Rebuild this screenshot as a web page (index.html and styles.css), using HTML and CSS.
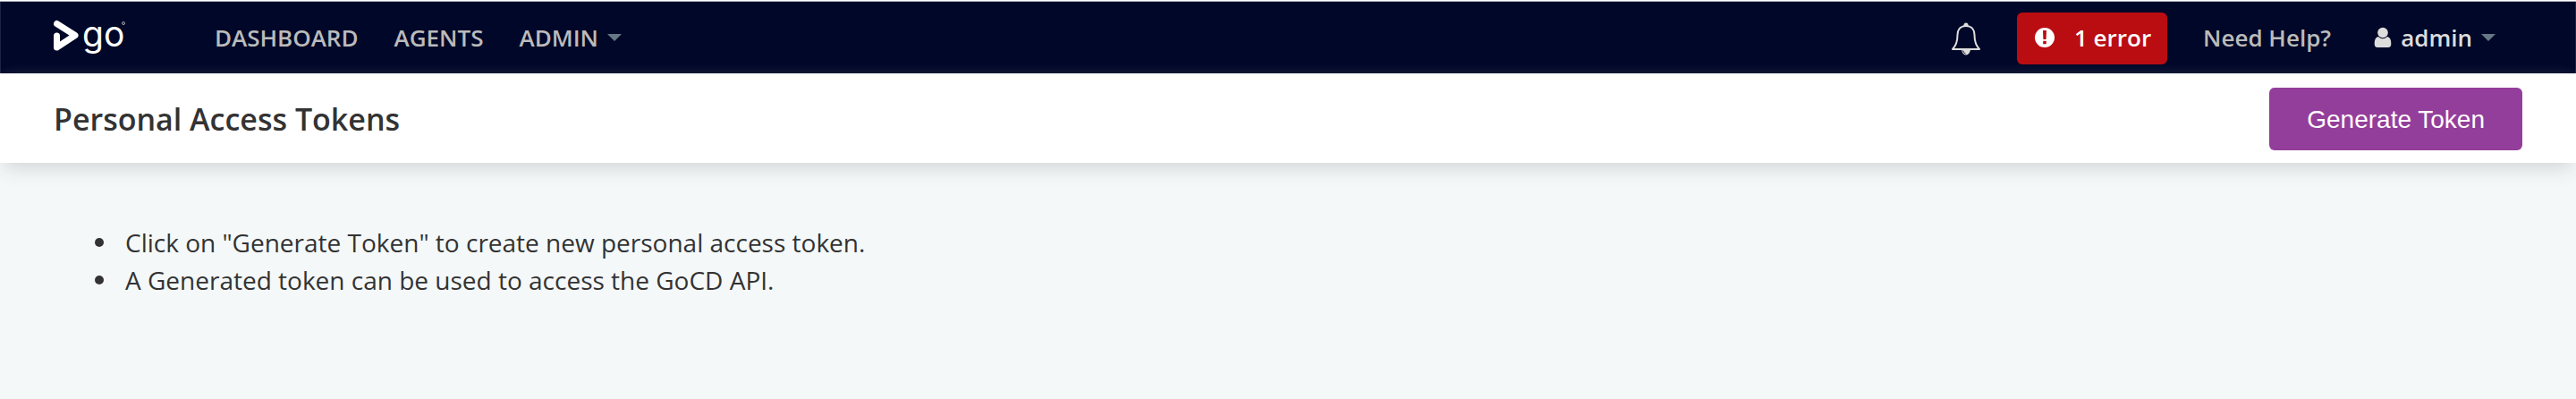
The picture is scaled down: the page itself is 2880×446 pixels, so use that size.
FILE: index.html
```html
<!DOCTYPE html>
<html lang="en">
<head>
<meta charset="utf-8">
<title>Personal Access Tokens - Go</title>
<link rel="stylesheet" href="styles.css">
</head>
<body>
<header class="site-header">
  <a class="logo" href="#" aria-label="Go">
    <svg width="92" height="56" viewBox="0 0 92 56" aria-hidden="true">
      <path class="logo-mark" d="M3.500 25V38L24 24.500L3.500 11.500"/>
      <text class="logo-word" x="32" y="37">go</text>
      <circle class="logo-dot" cx="78" cy="11" r="1.500"/>
    </svg>
  </a>
  <nav class="main-nav" aria-label="Main">
    <a href="#">DASHBOARD</a>
    <a href="#">AGENTS</a>
    <a href="#">ADMIN<span class="caret"></span></a>
  </nav>
  <div class="header-tools">
    <button class="bell" type="button" aria-label="Notifications">
      <svg width="34" height="38" viewBox="0 0 34 38" aria-hidden="true">
        <path class="bell-body" d="M17 4C10 4 7.500 9 7.500 14C7.500 22 6 26 2 30H32C28 26 26.500 22 26.500 14C26.500 9 24 4 17 4Z"/>
        <path class="bell-fill" d="M14.500 4.500V3a2.500 2.500 0 0 1 5 0V4.500ZM12 30H22a5 6.500 0 0 1-10 0Z"/>
        <path class="bell-mark" d="M13.500 31.500Q14 34 16.500 35"/>
      </svg>
    </button>
    <button class="error-button" type="button">
      <svg width="22" height="24" viewBox="0 0 22 24" aria-hidden="true">
        <circle cx="11" cy="12" r="11" fill="#fff"/>
        <path fill="#ba0d12" d="M9 4H13L12.600 14H9.400ZM9.200 15.800H12.800V19.200H9.200Z"/>
      </svg>
      1 error
    </button>
    <a class="help" href="#">Need Help?</a>
    <a class="user" href="#">
      <svg width="20" height="24" viewBox="0 0 20 24" aria-hidden="true">
        <circle cx="10" cy="6.500" r="5.800"/>
        <path d="M5 11Q10 15.500 15 11Q19.300 11.500 19.300 19Q19.300 23 16 23H4Q.7 23 .7 19Q.7 11.500 5 11Z"/>
      </svg>
      admin<span class="caret"></span>
    </a>
  </div>
</header>
<main>
  <div class="page-header">
    <h1>Personal Access Tokens</h1>
    <button class="generate" type="button">Generate Token</button>
  </div>
  <ul class="hints">
    <li>Click on "Generate Token" to create new personal access token.</li>
    <li>A Generated token can be used to access the GoCD API.</li>
  </ul>
</main>
</body>
</html>
```
FILE: styles.css
```css
* { box-sizing: border-box; }

body {
  margin: 0;
  min-height: 100vh;
  background: #f4f8f9;
  color: #333;
  font-family: "Open Sans", "Noto Sans", sans-serif;
  font-size: 28px;
}

button { border: 0; font: inherit; cursor: pointer; }
a { color: inherit; text-decoration: none; }
svg { display: block; flex: none; }

.site-header {
  display: flex;
  align-items: center;
  height: 82px;
  padding: 3px 90px 0 60px;
  border-top: 1px solid #fff;
  background: #000728;
  box-shadow: inset 0 1px #a9b0c0, inset 1px 0 #1b2440, inset -1px 0 #1b2440;
  color: #bbb;
  font-size: 26px;
  font-weight: 600;
}

.logo-mark { fill: none; stroke: #fff; stroke-width: 7; stroke-linecap: round; stroke-linejoin: round; }
.logo-word { fill: #fff; font-family: Inter, sans-serif; font-size: 39px; font-weight: 400; }
.logo-dot { fill: none; stroke: #aaa; stroke-width: 1; }

.main-nav { display: flex; gap: 40px; margin-left: 88px; padding-bottom: 2px; }
.main-nav a { display: flex; align-items: center; }

.caret {
  margin-left: 10px;
  border: 8px solid transparent;
  border-top-color: #647984;
  border-bottom: 0;
}

.header-tools { display: flex; align-items: center; margin-left: auto; }
.bell { padding: 2px 0 0; background: none; }
.bell-body { fill: none; stroke: #ddd; stroke-width: 2; stroke-linejoin: round; }
.bell-fill { fill: #ddd; }
.bell-mark { fill: none; stroke: #000728; stroke-width: 1; }

.error-button {
  display: flex;
  align-items: center;
  gap: 22px;
  height: 58px;
  margin: 0 40px;
  padding: 0 18px 2px 20px;
  border-radius: 6px;
  background: #ba0d12;
  color: #fff;
}

.help { padding-bottom: 2px; }
.user { display: flex; align-items: center; gap: 10px; margin-left: 48px; padding-bottom: 2px; color: #ddd; }
.user svg { fill: #ddd; }
.user .caret { margin-left: 0; }

.page-header {
  display: flex;
  align-items: center;
  justify-content: space-between;
  height: 100px;
  padding: 2px 60px 0;
  background: #fff;
  box-shadow: 0 10px 20px -4px #d2d6d6;
}

h1 { margin: 0; font-size: 34px; font-weight: 600; }

.generate {
  height: 70px;
  padding: 2px 42px 0;
  border-radius: 6px;
  background: #943e9b;
  color: #fff;
  font-family: "Liberation Sans", Arial, sans-serif;
  font-size: 28px;
}

.hints { margin: 0; padding: 68px 60px 0 106px; line-height: 42px; list-style: none; }
.hints li { display: flex; align-items: center; gap: 24px; }
.hints li::before { content: ""; width: 10px; height: 10px; border-radius: 50%; background: #333; }
```
